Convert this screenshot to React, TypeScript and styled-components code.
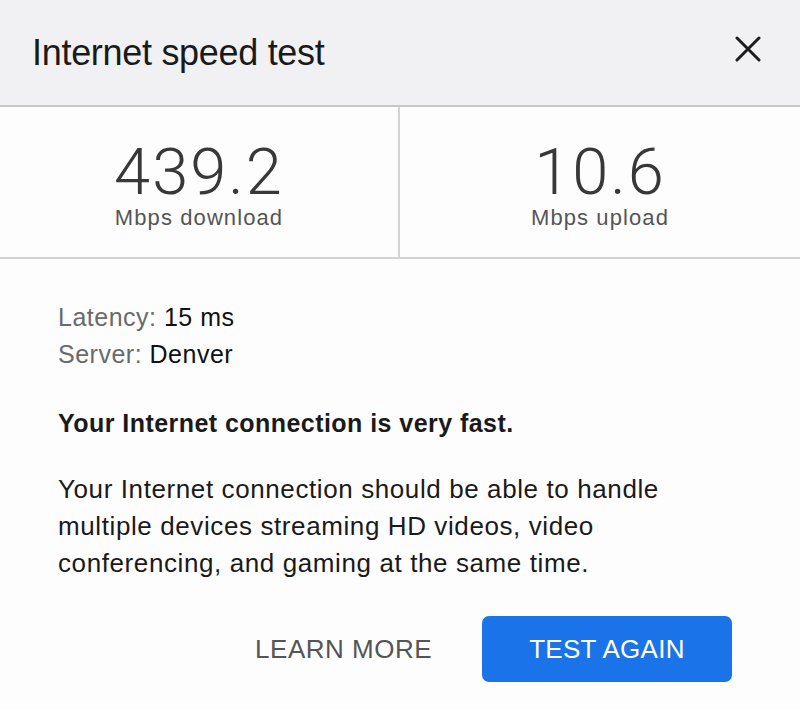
import React from "react";
import styled, { createGlobalStyle } from "styled-components";

const Global = createGlobalStyle`
  html, body { margin: 0; padding: 0; background: #fdfdfd; }
  body { font-family: "Liberation Sans", Arial, sans-serif; }
`;

const Dialog = styled.div`
  width: 800px;
  height: 710px;
  background: #fdfdfd;
  display: flex;
  flex-direction: column;
  overflow: hidden;
`;

const Header = styled.div`
  height: 105px;
  background: #f1f1f3;
  border-bottom: 2px solid #c8c8ca;
  display: flex;
  align-items: center;
  justify-content: space-between;
  padding: 0 39px 0 32px;
  box-sizing: content-box;
  flex-shrink: 0;
`;

const Title = styled.h1`
  margin: 0;
  font-size: 36px;
  line-height: 36px;
  font-weight: 400;
  color: #1a1a1a;
  letter-spacing: -0.3px;
`;

const CloseButton = styled.button`
  border: none;
  background: none;
  padding: 0;
  width: 26px;
  height: 26px;
  display: flex;
  margin-bottom: 8px;
`;

const Stats = styled.div`
  display: grid;
  grid-template-columns: 1fr 1fr;
  height: 150px;
  border-bottom: 2px solid #d2d2d2;
  flex-shrink: 0;
`;

const Stat = styled.div<{ $divider?: boolean }>`
  display: flex;
  flex-direction: column;
  align-items: center;
  padding-top: 35px;
  border-right: ${(p) => (p.$divider ? "2px solid #d4d4d4" : "none")};
`;

const Value = styled.div`
  font-family: Roboto, "Liberation Sans", sans-serif;
  font-weight: 300;
  font-size: 65px;
  line-height: 60px;
  color: #383838;
  letter-spacing: 2px;
`;

const Unit = styled.div`
  font-size: 22px;
  line-height: 31px;
  color: #555;
  letter-spacing: 1.1px;
`;

const Body = styled.div`
  padding: 40px 58px 0 58px;
  display: flex;
  flex-direction: column;
`;

const Meta = styled.div`
  font-size: 25px;
  line-height: 37px;
  color: #111;
  letter-spacing: 0.5px;
`;

const MetaLabel = styled.span`
  color: #6a6a6a;
`;

const Verdict = styled.div`
  margin-top: 35px;
  font-size: 25px;
  line-height: 30px;
  font-weight: 700;
  color: #1a1a1a;
  letter-spacing: 0.45px;
`;

const Paragraph = styled.p`
  margin: 33px 0 0 0;
  max-width: 640px;
  font-size: 26px;
  line-height: 37px;
  letter-spacing: 0.6px;
  color: #1a1a1a;
`;

const Actions = styled.div`
  display: flex;
  justify-content: flex-end;
  align-items: center;
  gap: 50px;
  padding: 34px 68px 0 0;
`;

const TextButton = styled.button`
  border: none;
  background: none;
  font-family: inherit;
  font-size: 26px;
  letter-spacing: 0.5px;
  color: #555;
  padding: 0;
`;

const PrimaryButton = styled.button`
  border: none;
  background: #1a73e8;
  color: #fff;
  font-family: inherit;
  font-size: 26px;
  letter-spacing: 0.3px;
  width: 250px;
  height: 66px;
  border-radius: 7px;
`;

export default function App() {
  return (
    <>
      <Global />
      <Dialog>
        <Header>
          <Title>Internet speed test</Title>
          <CloseButton aria-label="Close">
            <svg width="26" height="26" viewBox="0 0 26 26">
              <path d="M2 2 L24 24 M24 2 L2 24" stroke="#1c1c1c" strokeWidth="3" strokeLinecap="round" />
            </svg>
          </CloseButton>
        </Header>
        <Stats>
          <Stat $divider>
            <Value>439.2</Value>
            <Unit>Mbps download</Unit>
          </Stat>
          <Stat>
            <Value>10.6</Value>
            <Unit>Mbps upload</Unit>
          </Stat>
        </Stats>
        <Body>
          <Meta><MetaLabel>Latency: </MetaLabel>15 ms</Meta>
          <Meta><MetaLabel>Server: </MetaLabel>Denver</Meta>
          <Verdict>Your Internet connection is very fast.</Verdict>
          <Paragraph>
            Your Internet connection should be able to handle multiple devices streaming HD videos, video conferencing, and gaming at the same time.
          </Paragraph>
        </Body>
        <Actions>
          <TextButton>LEARN MORE</TextButton>
          <PrimaryButton>TEST AGAIN</PrimaryButton>
        </Actions>
      </Dialog>
    </>
  );
}
